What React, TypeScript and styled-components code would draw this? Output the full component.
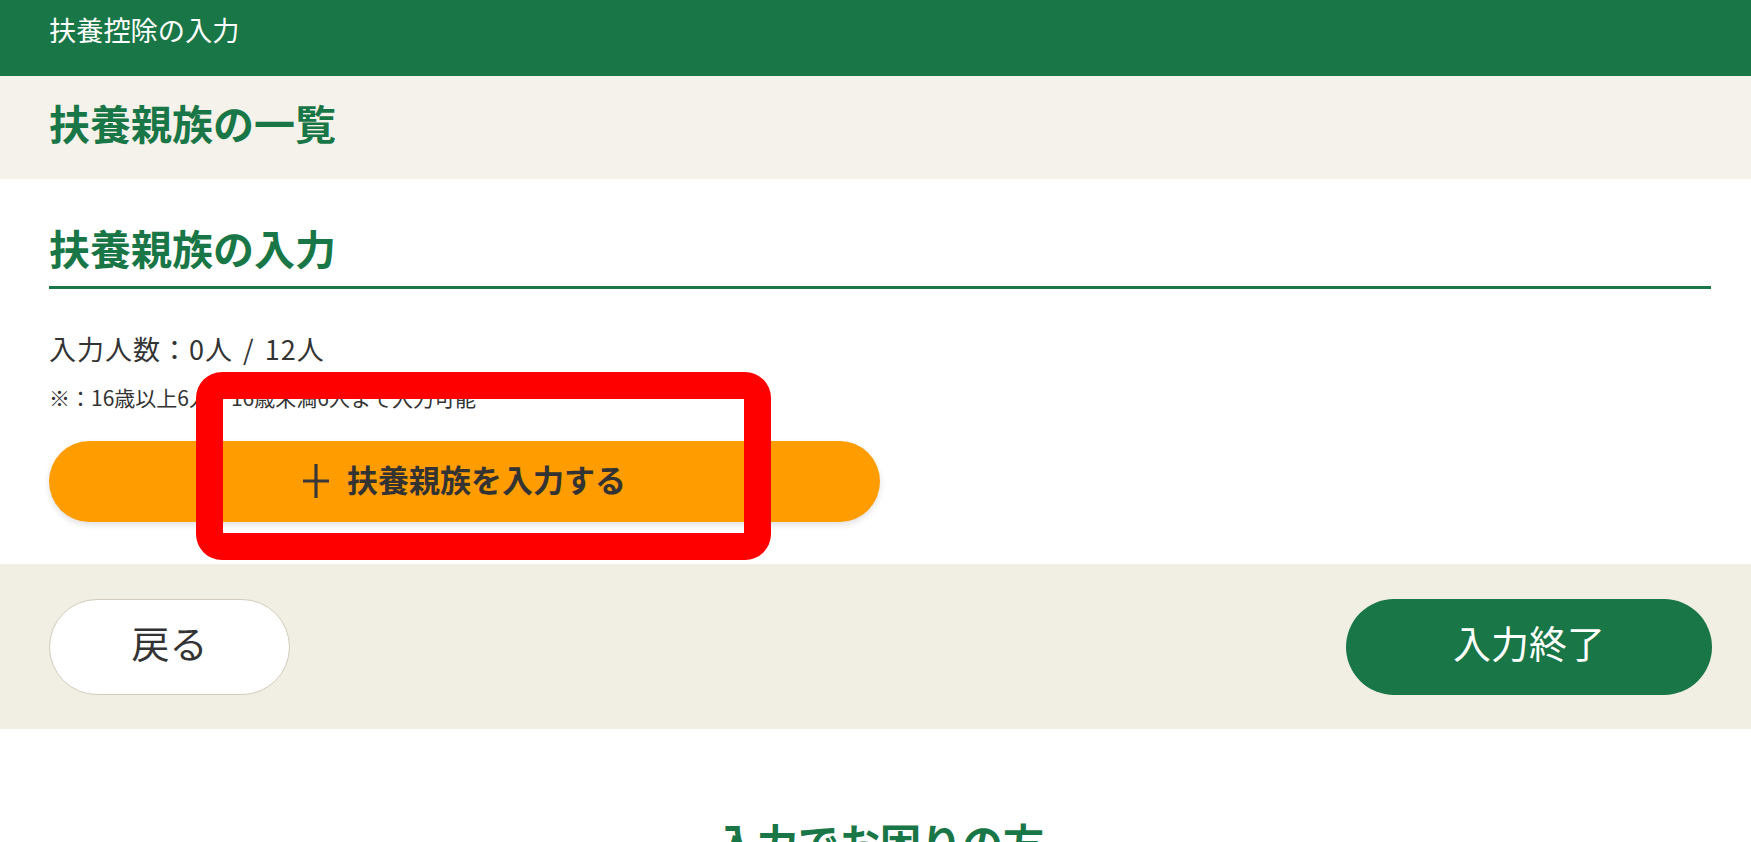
import React from "react";
import styled, { createGlobalStyle } from "styled-components";

const GlobalStyle = createGlobalStyle`
  html, body {
    margin: 0;
    padding: 0;
    background: #ffffff;
  }
  body {
    font-family: "Noto Sans CJK JP", "Noto Sans", sans-serif;
    color: #333333;
  }
  * {
    box-sizing: border-box;
  }
`;

const GREEN = "#197646";

const PlusIcon = () => (
  <svg width="26" height="34" viewBox="0 0 26 34" aria-hidden="true">
    <path d="M13 0 V34 M0 17 H26" stroke="#383838" strokeWidth="3.2" fill="none" />
  </svg>
);

const App = () => {
  return (
    <StPage>
      <GlobalStyle />
      <StHeader>扶養控除の入力</StHeader>

      <StTitleBand>
        <StPageTitle>扶養親族の一覧</StPageTitle>
      </StTitleBand>

      <StSection>
        <StSectionTitle>扶養親族の入力</StSectionTitle>
        <StCount>入力人数：0人 / 12人</StCount>
        <StNote>※：16歳以上6人、16歳未満6人まで入力可能</StNote>
        <StAddButton type="button">
          <PlusIcon />
          <span>扶養親族を入力する</span>
        </StAddButton>

        <StHighlight />
      </StSection>

      <StFooterBar>
        <StNavButton type="button" $variant="back">
          戻る
        </StNavButton>
        <StNavButton type="button" $variant="done">
          入力終了
        </StNavButton>
      </StFooterBar>

      <StHelp>
        <StHelpTitle>入力でお困りの方</StHelpTitle>
      </StHelp>
    </StPage>
  );
};

export default App;

const StPage = styled.div`
  width: 100%;
  min-height: 842px;
  overflow: hidden;
`;

const StHeader = styled.header`
  height: 76px;
  background-color: ${GREEN};
  color: #ffffff;
  font-size: 27.2px;
  line-height: 40px;
  padding: 9px 40px 0 49px;
`;

const StTitleBand = styled.div`
  background-color: #f5f2ec;
  padding: 16px 40px 27px 49px;
`;

const StPageTitle = styled.h1`
  margin: 0;
  color: ${GREEN};
  font-size: 41px;
  line-height: 60px;
  font-weight: 700;
`;

const StSection = styled.section`
  position: relative;
  padding: 38px 40px 42px 49px;
  display: flex;
  flex-direction: column;
  align-items: flex-start;
`;

const StSectionTitle = styled.h2`
  align-self: stretch;
  margin: 0;
  color: ${GREEN};
  font-size: 41px;
  line-height: 60px;
  font-weight: 700;
  padding-bottom: 9px;
  border-bottom: 3px solid ${GREEN};
`;

const StCount = styled.p`
  margin: 40px 0 0;
  font-size: 27px;
  line-height: 40px;
  letter-spacing: 1px;
  word-spacing: 3px;
  color: #333333;
`;

const StNote = styled.p`
  margin: 13px 0 0;
  font-size: 21px;
  line-height: 30px;
  color: #333333;
`;

const StAddButton = styled.button`
  margin-top: 29px;
  width: 831px;
  height: 81px;
  border: none;
  border-radius: 41px;
  background-color: #ff9c00;
  box-shadow: 0 3px 6px rgba(0, 0, 0, 0.12);
  display: flex;
  align-items: center;
  justify-content: center;
  gap: 18px;
  padding: 0 0 6px;
  font-family: inherit;
  font-size: 31px;
  font-weight: 700;
  line-height: 40px;
  color: #333333;
  cursor: pointer;

  svg {
    flex: none;
    margin-top: 4px;
  }
`;

/* red annotation frame laid over the add button */
const StHighlight = styled.div`
  position: absolute;
  left: 196px;
  top: 193px;
  width: 575px;
  height: 188px;
  border: 27px solid #ff0000;
  border-radius: 26px;
  pointer-events: none;
`;

const StFooterBar = styled.div`
  background-color: #f1eee3;
  padding: 35px 39px 34px 49px;
  display: flex;
  justify-content: space-between;
  align-items: center;
`;

const StNavButton = styled.button<{ $variant: "back" | "done" }>`
  height: 96px;
  width: ${({ $variant }) => ($variant === "back" ? "241px" : "366px")};
  border-radius: 48px;
  border: ${({ $variant }) => ($variant === "back" ? "1px solid #d3cbbb" : "none")};
  background-color: ${({ $variant }) => ($variant === "back" ? "#ffffff" : GREEN)};
  color: ${({ $variant }) => ($variant === "back" ? "#333333" : "#ffffff")};
  font-family: inherit;
  font-size: 38px;
  line-height: 50px;
  font-weight: 400;
  display: flex;
  align-items: center;
  justify-content: center;
  padding: 0 0 10px;
  cursor: pointer;
`;

const StHelp = styled.div`
  padding: 82px 40px 0 49px;
  display: flex;
  justify-content: center;
`;

const StHelpTitle = styled.h2`
  margin: 0;
  color: ${GREEN};
  font-size: 41px;
  line-height: 60px;
  font-weight: 700;
`;
